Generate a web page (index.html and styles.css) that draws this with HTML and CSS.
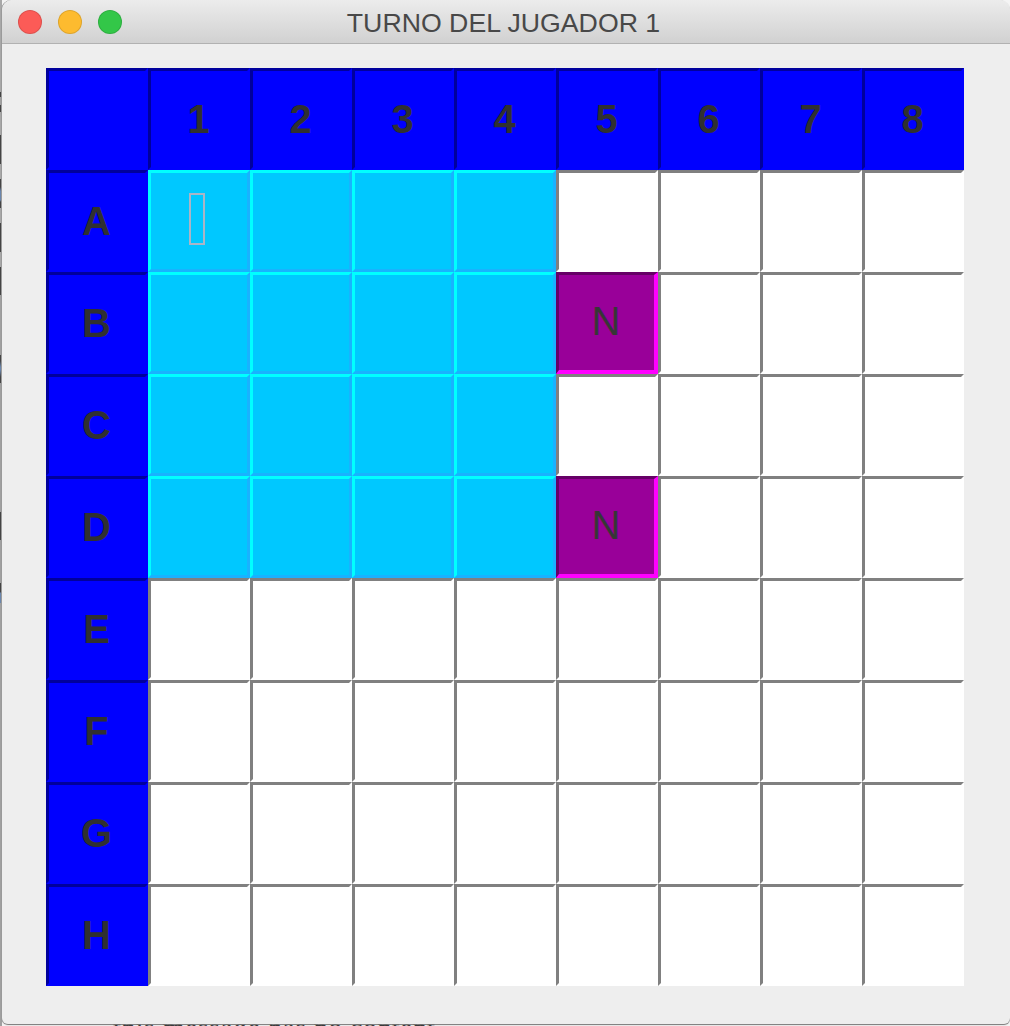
FILE: index.html
```html
<!DOCTYPE html>
<html lang="en">
<head>
  <meta charset="UTF-8" />
  <title>Turno del jugador 1</title>
  <link rel="stylesheet" href="styles.css">
</head>
<body>

  <!-- Desktop behind the window -->
  <p class="behind-text">this message has no content</p>

  <div class="window">
    <div class="titlebar">
      <div class="lights">
        <span class="light red"></span>
        <span class="light yellow"></span>
        <span class="light green"></span>
      </div>
      <div class="title">TURNO DEL JUGADOR 1</div>
    </div>

    <div class="board">
      <!-- Header row -->
      <div class="cell head"></div>
      <div class="cell head">1</div>
      <div class="cell head">2</div>
      <div class="cell head">3</div>
      <div class="cell head">4</div>
      <div class="cell head">5</div>
      <div class="cell head">6</div>
      <div class="cell head">7</div>
      <div class="cell head">8</div>

      <!-- A -->
      <div class="cell head">A</div>
      <div class="cell water"><span class="tofu"></span></div>
      <div class="cell water"></div>
      <div class="cell water"></div>
      <div class="cell water"></div>
      <div class="cell"></div>
      <div class="cell"></div>
      <div class="cell"></div>
      <div class="cell"></div>

      <!-- B -->
      <div class="cell head">B</div>
      <div class="cell water"></div>
      <div class="cell water"></div>
      <div class="cell water"></div>
      <div class="cell water"></div>
      <div class="cell ship">N</div>
      <div class="cell"></div>
      <div class="cell"></div>
      <div class="cell"></div>

      <!-- C -->
      <div class="cell head">C</div>
      <div class="cell water"></div>
      <div class="cell water"></div>
      <div class="cell water"></div>
      <div class="cell water"></div>
      <div class="cell"></div>
      <div class="cell"></div>
      <div class="cell"></div>
      <div class="cell"></div>

      <!-- D -->
      <div class="cell head">D</div>
      <div class="cell water"></div>
      <div class="cell water"></div>
      <div class="cell water"></div>
      <div class="cell water"></div>
      <div class="cell ship">N</div>
      <div class="cell"></div>
      <div class="cell"></div>
      <div class="cell"></div>

      <!-- E -->
      <div class="cell head">E</div>
      <div class="cell"></div>
      <div class="cell"></div>
      <div class="cell"></div>
      <div class="cell"></div>
      <div class="cell"></div>
      <div class="cell"></div>
      <div class="cell"></div>
      <div class="cell"></div>

      <!-- F -->
      <div class="cell head">F</div>
      <div class="cell"></div>
      <div class="cell"></div>
      <div class="cell"></div>
      <div class="cell"></div>
      <div class="cell"></div>
      <div class="cell"></div>
      <div class="cell"></div>
      <div class="cell"></div>

      <!-- G -->
      <div class="cell head">G</div>
      <div class="cell"></div>
      <div class="cell"></div>
      <div class="cell"></div>
      <div class="cell"></div>
      <div class="cell"></div>
      <div class="cell"></div>
      <div class="cell"></div>
      <div class="cell"></div>

      <!-- H -->
      <div class="cell head">H</div>
      <div class="cell"></div>
      <div class="cell"></div>
      <div class="cell"></div>
      <div class="cell"></div>
      <div class="cell"></div>
      <div class="cell"></div>
      <div class="cell"></div>
      <div class="cell"></div>
    </div>
  </div>

</body>
</html>
```

FILE: styles.css
```css
* {
  margin: 0;
  padding: 0;
  box-sizing: border-box;
}

html,
body {
  height: 100%;
}

body {
  position: relative;
  overflow: hidden;
  font-family: "Liberation Sans", Arial, sans-serif;
  background-color: #f4f4f4;
  /* strip of the desktop showing left of the window */
  background-image: linear-gradient(to bottom,
    #a8a8a8 0, #a8a8a8 92px, #444 92px, #444 97px, #a0a0a0 97px, #a0a0a0 105px,
    #444 105px, #444 112px, #a8a8a8 112px, #a8a8a8 135px, #444 135px, #444 164px,
    #a8a8a8 164px, #a8a8a8 179px, #444 179px, #444 187px, #6a86ad 191px, #6a86ad 200px,
    #444 202px, #444 208px, #a8a8a8 208px, #a8a8a8 223px, #444 223px, #444 252px,
    #a8a8a8 252px, #a8a8a8 267px, #444 267px, #444 295px, #a0a0a0 295px, #a0a0a0 355px,
    #444 355px, #444 361px, #6a86ad 367px, #6a86ad 370px, #444 377px, #444 383px,
    #a0a0a0 383px, #a0a0a0 512px, #444 512px, #444 540px, #a0a0a0 540px, #a0a0a0 583px,
    #444 583px, #444 592px, #6a86ad 593px, #6a86ad 603px, #a0a0a0 603px, #a0a0a0 1026px);
  background-size: 2px 100%;
  background-repeat: no-repeat;
}

.behind-text {
  position: absolute;
  left: 113px;
  top: 1014px;
  font-family: "Liberation Serif", serif;
  font-size: 29px;
  line-height: 28px;
  color: #333;
  white-space: nowrap;
}

.window {
  position: absolute;
  left: 2px;
  right: 0;
  top: 0;
  height: 1024px;
  background: #eeeeee;
  border-radius: 10px 10px 6px 6px;
  box-shadow: -1px 0 0 #9a9a9a, 0 1px 1px #777;
  overflow: hidden;
}

.titlebar {
  display: flex;
  align-items: center;
  height: 44px;
  padding-left: 16px;
  background: linear-gradient(to bottom, #ececec, #d1d1d1);
  border-bottom: 1px solid #b1b1b1;
}

.lights {
  display: flex;
  gap: 16px;
}

.light {
  width: 24px;
  height: 24px;
  border-radius: 50%;
  border: 1px solid rgba(0, 0, 0, 0.12);
}

.red {
  background: #fc5b57;
}

.yellow {
  background: #fdbb2f;
}

.green {
  background: #33c748;
}

.title {
  flex: 1;
  padding: 3px 125px 0 0;
  text-align: center;
  font-size: 26.7px;
  color: #484848;
}

.board {
  display: grid;
  grid-template-columns: repeat(9, 102px);
  grid-auto-rows: 102px;
  margin: 24px 0 0 44px;
  width: 918px;
}

.cell {
  display: flex;
  align-items: center;
  justify-content: center;
  font-size: 40px;
  color: #363636;
  background: #fff;
  border: 3px solid;
  border-color: #808080 #fff #fff #808080;
}

.head {
  padding-right: 1px;
  font-weight: bold;
  color: #303030;
  background: #0000ff;
  border-color: #00009c #0000ff #0000ff #00009c;
}

.water {
  background: #00c8ff;
  border-color: #00ffff #19b2ff #19b2ff #00ffff;
}

.ship {
  padding: 0 1px 2px 0;
  background: #990099;
  border-width: 3px 4px 4px 3px;
  border-color: #660066 #ff00ff #ff00ff #660066;
}

/* missing-glyph box in cell A1 */
.tofu {
  width: 16px;
  height: 52px;
  margin: 0 4px 4px 0;
  border: 2px solid #acb4c6;
}
```
